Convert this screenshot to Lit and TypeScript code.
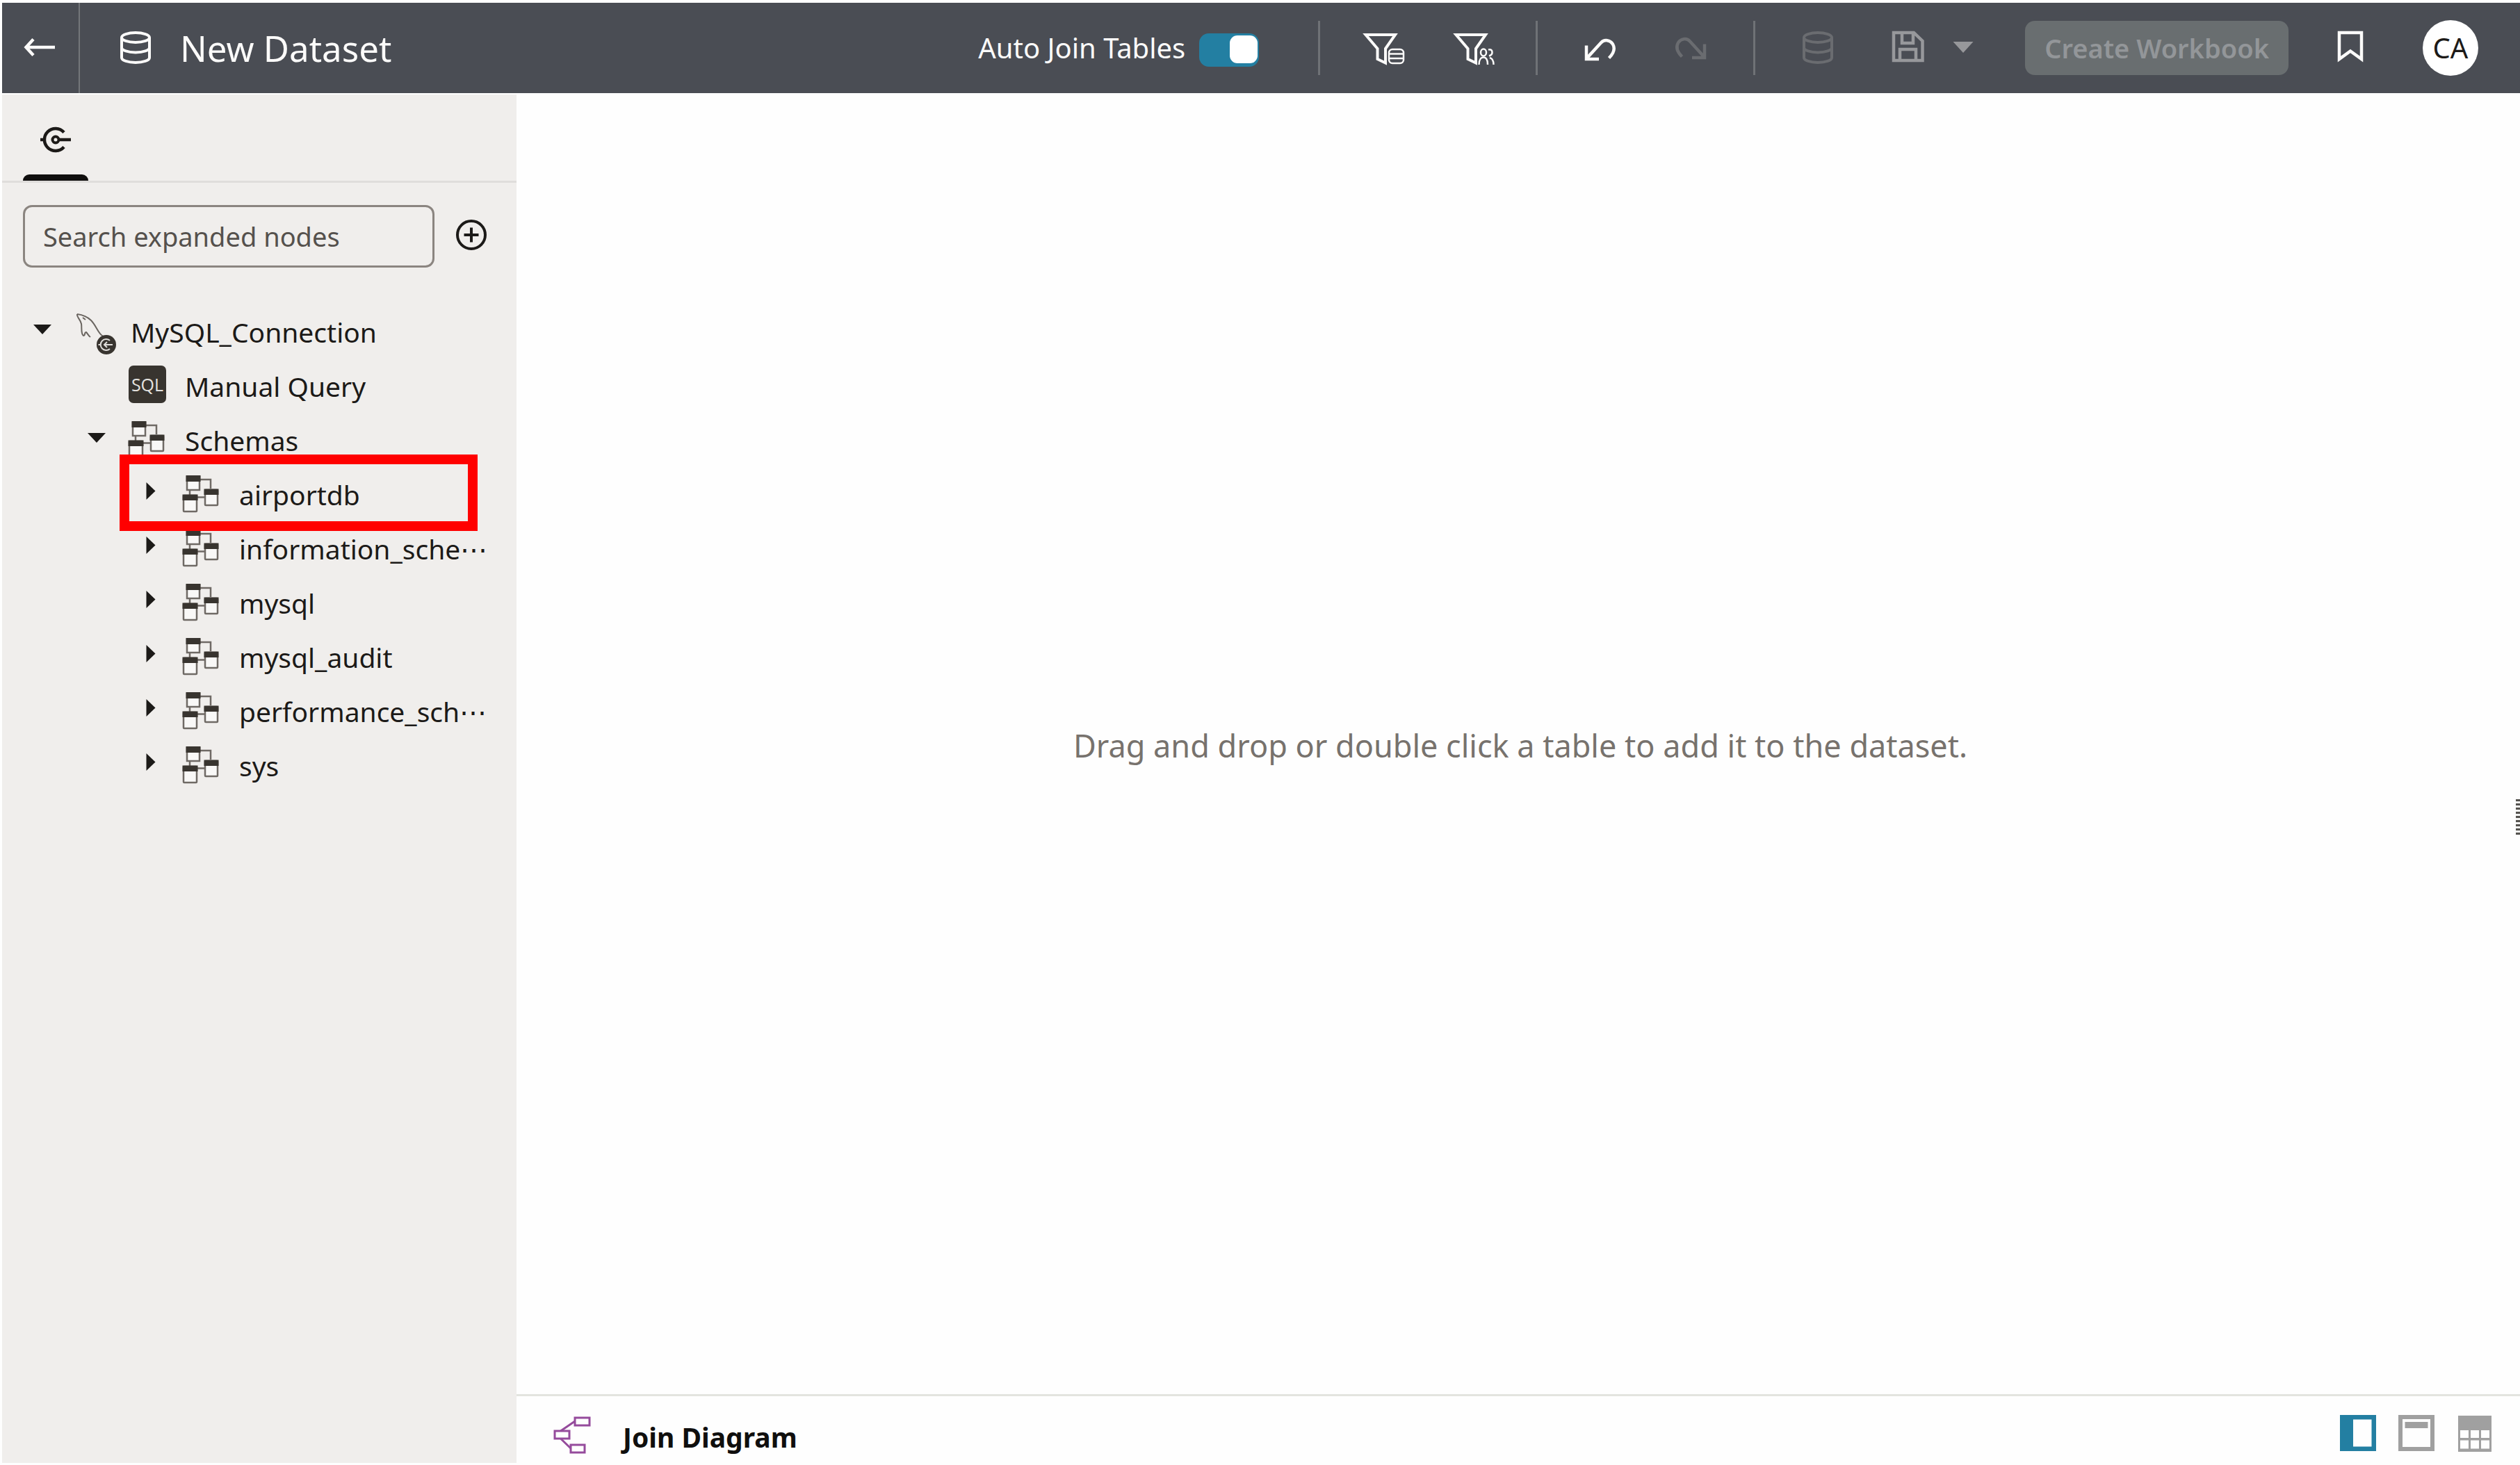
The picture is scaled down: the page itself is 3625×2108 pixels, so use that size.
import { LitElement, html, css, svg, nothing, TemplateResult } from "lit";
import { customElement, property } from "lit/decorators.js";
import { classMap } from "lit/directives/class-map.js";

const shapes: Record<string, TemplateResult> = {
  back: svg`<path d="M51 29H10M20 17.500L9.500 29L20 40.500" stroke-width="4.500"/>`,
  database: svg`<ellipse cx="30" cy="15" rx="20" ry="7"/><path d="M10 15V44C10 47.900 19 51 30 51S50 47.900 50 44V15M10 29.500C10 33.400 19 36.500 30 36.500S50 33.400 50 29.500"/>`,
  funnelData: svg`<path d="M5.500 11H48L34 31V51.500L22.500 46V31Z" stroke-width="4"/>
    <g stroke-width="2.500"><rect x="39" y="32" width="21" height="20" rx="5"/><path d="M39 38.500H60M39 45H60"/></g>`,
  funnelUsers: svg`<path d="M5.500 11H48L34 31V51.500L22.500 46V31Z" stroke-width="4"/>
    <g stroke-width="2.500"><ellipse cx="45" cy="36.500" rx="4" ry="5"/><path d="M38.500 54C38.500 47 41.500 43.500 45 43.500S51 47 51 54M52 32.500C56 31.500 57.500 33.500 57.500 36.500S56 40.500 53 41.500M54 44C57.500 45 59.500 48 59.500 54"/></g>`,
  undo: svg`<path d="M10 26.500V46H28M10.500 45L31 22.500C36 17 44 18.500 48 24.500C52 31.500 49 38 42.500 44.500" stroke-width="4.500"/>`,
  redo: svg`<path d="M50 24.500V44H32M49.500 43L29 20.500C24 15 16 16.500 12 22.500C8 29.500 11 36 17.500 42.500" stroke-width="4.500"/>`,
  save: svg`<path d="M9 8H38L50.500 20V48H9ZM21 8V23H37V8M18 48V32H41V48" stroke-width="4.500"/>`,
  bookmark: svg`<path d="M14 8H46V46L30 34.500L14 46Z" stroke-width="4.500"/>`,
  connection: svg`<path d="M42 19.500A16 16 0 1 0 42 40.500" stroke-width="4.500"/><circle cx="30" cy="30" r="4.500" stroke-width="4"/><path d="M34 30H52M8 30H14" stroke-width="4.500"/>`,
  add: svg`<circle cx="30" cy="30" r="20" stroke-width="4"/><path d="M30 19.500V40.500M19.500 30H40.500" stroke-width="4"/>`,
  join: svg`<g stroke-width="3"><rect x="33" y="5" width="21" height="11"/><rect x="4" y="24" width="21" height="11"/><rect x="27" y="44" width="20" height="11"/><path d="M33 10L12.500 24M12.500 35L27 49"/></g>`,
  viewSide: svg`<path d="M4 4H56V56H4ZM23 10.500V49.500H49.500V10.500Z" fill="currentColor" fill-rule="evenodd" stroke="none"/>`,
  viewTop: svg`<rect x="7" y="7" width="46" height="46" stroke-width="6"/><path d="M13.500 14H46.500V23H13.500Z" fill="currentColor" stroke="none"/>`,
  viewGrid: svg`<path d="M6 5H54V57H6ZM9 26V37H21V26ZM24 26V37H36V26ZM39 26V37H51V26ZM9 40.500V52.500H21V40.500ZM24 40.500V52.500H36V40.500ZM39 40.500V52.500H51V40.500Z" fill="currentColor" fill-rule="evenodd" stroke="none"/>`,
  caretDown: svg`<path d="M17 20H43L30 34Z" fill="currentColor" stroke="none"/>`,
  caretSave: svg`<path d="M15.500 21H44.500L30 37Z" fill="currentColor" stroke="none"/>`,
  caretRight: svg`<path d="M23.500 13V38L36.500 25.500Z" fill="currentColor" stroke="none"/>`,
  schema: svg`<g stroke="#6f6a65" stroke-width="2.500" fill="#f9f8f7">
      <path d="M27 9H42V22M12 24V32M23 34.500H33" fill="none"/>
      <rect x="8" y="5" width="18" height="19"/><rect x="34" y="24" width="18" height="22" rx="1"/><rect x="3" y="32" width="19" height="23" rx="1"/></g>
    <path d="M6.500 3H27.500V12H6.500ZM32.500 22.500H53.500V31H32.500ZM1.500 30.500H23.500V39H1.500Z" fill="#38342f" stroke="none"/>`,
  mysql: svg`<path d="M6 5C14 6 20 8 26 14C33 21 36 32 42 36C45 38 48 38 51 40M6 5C5 9 11 13 12 19C13 25 11 33 15 36C18 36 16 31 19 31C21 33 22 36 25 38M14 10L18 13" stroke="#6a6560" stroke-width="2"/>
    <circle cx="48" cy="49" r="14" fill="#38342f" stroke="none"/><path d="M53 43A8 8 0 1 0 53 55M36.500 49H40M45 49H57M49 45L45 49L49 53" stroke="#dedcd9" stroke-width="2"/>`,
};

const icon = (name: string) =>
  html`<svg class="icon" viewBox="0 0 60 60" aria-hidden="true">${shapes[name]}</svg>`;

const iconStyles = css`
  .icon {
    display: block;
    flex: none;
    width: 60px;
    height: 60px;
    overflow: visible;
    fill: none;
    stroke: currentColor;
    stroke-width: 4;
  }
  button {
    display: flex;
    align-items: center;
    justify-content: center;
    margin: 0;
    padding: 0;
    border: 0;
    background: none;
    color: inherit;
    font: inherit;
  }
`;

@customElement("top-bar")
class TopBar extends LitElement {
  static styles = [
    iconStyles,
    css`
      :host {
        display: flex;
        align-items: center;
        height: 130px;
        background: #4a4d54;
        color: #fcfbfa;
      }
      .back {
        align-self: stretch;
        width: 112px;
        border-right: 2px solid #73767a;
      }
      .title-icon {
        margin-left: 50px;
      }
      .title {
        margin: 0 auto 0 34px;
        font-size: 51px;
        font-weight: 400;
        white-space: nowrap;
      }
      .switch {
        display: flex;
        align-items: center;
        gap: 20px;
        margin-right: 60px;
        white-space: nowrap;
      }
      .toggle {
        appearance: none;
        display: flex;
        box-sizing: border-box;
        width: 86px;
        height: 48px;
        margin: 6px 0 0;
        padding: 3px 2px 5px;
        border-radius: 14px;
        background: #237fa2;
      }
      .toggle:checked {
        justify-content: flex-end;
      }
      .toggle::before {
        content: "";
        width: 40px;
        height: 40px;
        border-radius: 11px;
        background: #fff;
      }
      .group {
        display: flex;
      }
      .tool {
        width: 130px;
        height: 78px;
      }
      .caret {
        width: 28px;
        height: 78px;
        color: #97989b;
      }
      .off {
        color: #6a6c70;
      }
      .dim {
        color: #97989b;
      }
      .divider {
        width: 3px;
        height: 78px;
        margin: 0 25px;
        background: #6f7276;
      }
      .create {
        height: 78px;
        margin: 0 24px 0 75px;
        padding: 0 28px;
        border-radius: 14px;
        background: #696e70;
        color: #939699;
        font-size: 38px;
        font-weight: 600;
        white-space: nowrap;
      }
      .avatar {
        width: 80px;
        height: 80px;
        margin: 0 60px 0 39px;
        border-radius: 50%;
        background: #fff;
        color: #1c1a18;
      }
    `,
  ];

  render() {
    return html`
      <button class="back" aria-label="Back">${icon("back")}</button>
      <div class="title-icon">${icon("database")}</div>
      <h1 class="title">New Dataset</h1>
      <label class="switch">
        Auto Join Tables
        <input class="toggle" type="checkbox" role="switch" checked />
      </label>
      <div class="divider"></div>
      <div class="group">
        <button class="tool" aria-label="Data filter">${icon("funnelData")}</button>
        <button class="tool" aria-label="User filter">${icon("funnelUsers")}</button>
      </div>
      <div class="divider"></div>
      <div class="group">
        <button class="tool" aria-label="Undo">${icon("undo")}</button>
        <button class="tool off" aria-label="Redo" disabled>${icon("redo")}</button>
      </div>
      <div class="divider"></div>
      <div class="group">
        <button class="tool off" aria-label="Dataset" disabled>${icon("database")}</button>
        <button class="tool dim" aria-label="Save">${icon("save")}</button>
        <button class="caret" aria-label="Save options">${icon("caretSave")}</button>
      </div>
      <button class="create" disabled>Create Workbook</button>
      <button class="tool" aria-label="Bookmark">${icon("bookmark")}</button>
      <button class="avatar" aria-label="Account">CA</button>
    `;
  }
}

interface TreeNode {
  label: string;
  icon: "mysql" | "sql" | "schema";
  level: number;
  open?: boolean;
  leaf?: boolean;
  marked?: boolean;
}

const nodes: TreeNode[] = [
  { label: "MySQL_Connection", icon: "mysql", level: 0, open: true },
  { label: "Manual Query", icon: "sql", level: 1, leaf: true },
  { label: "Schemas", icon: "schema", level: 1, open: true },
  { label: "airportdb", icon: "schema", level: 2, marked: true },
  { label: "information_sche⋯", icon: "schema", level: 2 },
  { label: "mysql", icon: "schema", level: 2 },
  { label: "mysql_audit", icon: "schema", level: 2 },
  { label: "performance_sch⋯", icon: "schema", level: 2 },
  { label: "sys", icon: "schema", level: 2 },
];

@customElement("source-panel")
class SourcePanel extends LitElement {
  static styles = [
    iconStyles,
    css`
      :host {
        display: block;
        background: #f0eeec;
        color: #1c1a18;
      }
      .tabs {
        display: flex;
        padding-left: 30px;
        border-bottom: 3px solid #dfdddb;
      }
      .tab {
        flex-direction: column;
        justify-content: space-between;
        width: 94px;
        height: 124px;
        padding-top: 35px;
      }
      .tab::after {
        content: "";
        align-self: stretch;
        height: 9px;
        border-radius: 9px 9px 0 0;
        background: #100f0e;
      }
      .search {
        display: flex;
        align-items: center;
        padding: 32px 0 0 30px;
      }
      .field {
        box-sizing: border-box;
        width: 592px;
        height: 90px;
        padding: 0 26px;
        border: 3px solid #8b8580;
        border-radius: 13px;
        background: transparent;
        color: #1c1a18;
        font: inherit;
        font-size: 38px;
      }
      .field::placeholder {
        color: #55514d;
        opacity: 1;
      }
      .add {
        margin: 0 0 4px 23px;
      }
      .tree {
        margin: 53px 0 0;
        padding: 0;
        list-style: none;
        font-size: 39px;
      }
      .row {
        position: relative;
        display: flex;
        align-items: center;
        height: 78px;
        padding-left: 28px;
        white-space: nowrap;
      }
      .level-1 {
        padding-left: 106px;
      }
      .level-2 {
        padding-left: 184px;
      }
      .expander {
        width: 60px;
        height: 60px;
      }
      .badge {
        display: flex;
        align-items: center;
        width: 60px;
        margin: 0 23px 0 14px;
      }
      .sql {
        display: flex;
        align-items: center;
        justify-content: center;
        width: 54px;
        height: 54px;
        margin: 0 0 4px 2px;
        border-radius: 7px;
        background: #38342f;
        color: #e4e2df;
        font-family: "Open Sans", sans-serif;
        font-size: 25px;
      }
      .mark {
        position: absolute;
        z-index: 1;
        top: -18px;
        left: 169px;
        box-sizing: border-box;
        width: 515px;
        height: 110px;
        border: 14px solid #ff0000;
        pointer-events: none;
      }
    `,
  ];

  private row(node: TreeNode) {
    const classes = { row: true, "level-1": node.level === 1, "level-2": node.level === 2 };
    return html`
      <li class=${classMap(classes)}>
        ${node.leaf
          ? html`<span class="expander"></span>`
          : html`<button class="expander" aria-label="Toggle ${node.label}" aria-expanded=${node.open ? "true" : "false"}>
              ${icon(node.open ? "caretDown" : "caretRight")}
            </button>`}
        <span class="badge">${node.icon === "sql" ? html`<span class="sql">SQL</span>` : icon(node.icon)}</span>
        <span>${node.label}</span>
        ${node.marked ? html`<div class="mark"></div>` : nothing}
      </li>
    `;
  }

  render() {
    return html`
      <div class="tabs" role="tablist">
        <button class="tab" role="tab" aria-selected="true" aria-label="Connections">${icon("connection")}</button>
      </div>
      <div class="search">
        <input class="field" type="text" aria-label="Search expanded nodes" placeholder="Search expanded nodes" />
        <button class="add" aria-label="Add">${icon("add")}</button>
      </div>
      <ul class="tree">
        ${nodes.map((node) => this.row(node))}
      </ul>
    `;
  }
}

@customElement("join-canvas")
class JoinCanvas extends LitElement {
  static styles = [
    iconStyles,
    css`
      :host {
        display: flex;
        flex-direction: column;
        min-width: 0;
        background: #fefefe;
      }
      .drop {
        position: relative;
        display: flex;
        flex: 1;
        align-items: center;
        justify-content: center;
        padding: 2px 0 0 6px;
      }
      .hint {
        margin: 0;
        color: #77726d;
        font-size: 45px;
      }
      .grip {
        position: absolute;
        top: 50%;
        right: 0;
        width: 6px;
        height: 52px;
        margin-top: 79px;
        background: repeating-linear-gradient(#55534f 0 3px, #f4f4f3 3px 6px);
      }
      .footer {
        display: flex;
        align-items: center;
        height: 96px;
        border-top: 3px solid #e3e4df;
      }
      .name {
        display: flex;
        align-items: center;
        gap: 42px;
        margin: 16px auto 0 51px;
        color: #100f0e;
        font-size: 39px;
        font-weight: 700;
      }
      .name .icon {
        color: #954b9c;
      }
      .name-text {
        padding-top: 4px;
      }
      .views {
        display: flex;
        gap: 24px;
        margin: 10px 35px 0 0;
        color: #a0a0a0;
      }
      .active {
        color: #237fa2;
      }
    `,
  ];

  @property() view = "viewSide";

  render() {
    const views = [
      ["viewSide", "Side panel"],
      ["viewTop", "Header"],
      ["viewGrid", "Data grid"],
    ];
    return html`
      <div class="drop">
        <p class="hint">Drag and drop or double click a table to add it to the dataset.</p>
        <div class="grip"></div>
      </div>
      <div class="footer">
        <h2 class="name">${icon("join")}<span class="name-text">Join Diagram</span></h2>
        <div class="views">
          ${views.map(
            ([id, label]) => html`<button
              class=${classMap({ active: this.view === id })}
              aria-label=${label}
              @click=${() => (this.view = id)}
            >
              ${icon(id)}
            </button>`
          )}
        </div>
      </div>
    `;
  }
}

@customElement("app-root")
class AppRoot extends LitElement {
  static styles = css`
    :host {
      display: grid;
      grid-template: auto 1fr / 740px 1fr;
      row-gap: 2px;
      box-sizing: border-box;
      min-height: 100vh;
      padding: 4px 0 3px 3px;
      background: #fefefe;
      font-family: "Noto Sans", sans-serif;
      font-size: 40px;
      line-height: 1;
    }
    .top {
      grid-column: 1 / -1;
    }
  `;

  render() {
    return html`
      <top-bar class="top"></top-bar>
      <source-panel></source-panel>
      <join-canvas></join-canvas>
    `;
  }
}
